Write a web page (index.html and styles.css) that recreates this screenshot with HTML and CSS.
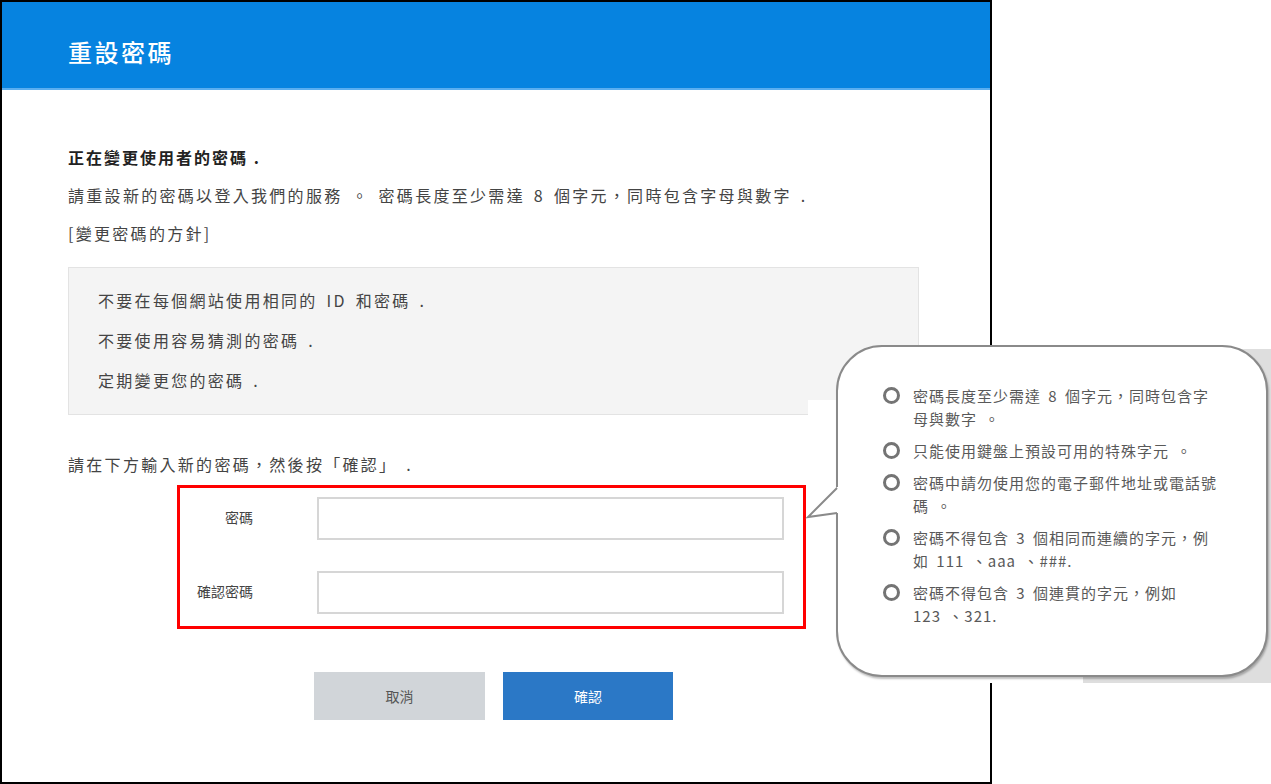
FILE: index.html
```html
<!DOCTYPE html>
<html lang="zh-Hant">
<head>
<meta charset="utf-8">
<title>重設密碼</title>
<link rel="stylesheet" href="styles.css">
</head>
<body>
<div class="dialog">
  <div class="header"><h1 class="title">重設密碼</h1></div>
  <div class="content">
    <p class="lead">正在變更使用者的密碼 .</p>
    <p class="line">請重設新的密碼以登入我們的服務 。 密碼長度至少需達 8 個字元，同時包含字母與數字 .</p>
    <p class="line">[變更密碼的方針]</p>
    <div class="policy">
      <p>不要在每個網站使用相同的 ID 和密碼 .</p>
      <p>不要使用容易猜測的密碼 .</p>
      <p>定期變更您的密碼 .</p>
    </div>
    <p class="line instr">請在下方輸入新的密碼，然後按「確認」 .</p>
    <div class="form-box">
      <label class="label" for="pw">密碼</label>
      <input class="field" id="pw" type="password">
      <label class="label" for="pw2">確認密碼</label>
      <input class="field" id="pw2" type="password">
    </div>
    <div class="buttons">
      <button class="btn btn-cancel" type="button">取消</button>
      <button class="btn btn-ok" type="button">確認</button>
    </div>
  </div>
</div>

<div class="cover"></div>
<div class="shade"></div>
<div class="bubble">
  <ul class="rules">
    <li><span class="dot"></span><span class="txt">密碼長度至少需達 8 個字元，同時包含字<br>母與數字 。</span></li>
    <li><span class="dot"></span><span class="txt">只能使用鍵盤上預設可用的特殊字元 。</span></li>
    <li><span class="dot"></span><span class="txt">密碼中請勿使用您的電子郵件地址或電話號<br>碼 。</span></li>
    <li><span class="dot"></span><span class="txt">密碼不得包含 3 個相同而連續的字元，例<br>如 111 、aaa 、###.</span></li>
    <li><span class="dot"></span><span class="txt">密碼不得包含 3 個連貫的字元，例如<br>123 、321.</span></li>
  </ul>
</div>
<svg class="pointer" width="40" height="36" viewBox="0 0 40 36">
  <polygon points="33,3 4,33 33,29 38,29 38,3" fill="#ffffff"/>
  <polyline points="33,4 4,33 33,29" fill="none" stroke="#8a8a8a" stroke-width="2" stroke-linejoin="miter"/>
</svg>
</body>
</html>
```

FILE: styles.css
```css
* { box-sizing: border-box; }

html, body {
  margin: 0;
  padding: 0;
}

body {
  width: 1271px;
  height: 784px;
  position: relative;
  overflow: hidden;
  background: #ffffff;
  font-family: "Noto Sans CJK TC", "Noto Sans", sans-serif;
  color: #444;
}

.dialog {
  width: 992px;
  height: 784px;
  border: 2px solid #000;
  background: #fff;
}

.header {
  height: 88px;
  background: #0683e0;
  border-bottom: 2px solid #5aaef0;
  padding: 14px 0 0 66px;
  display: flex;
  align-items: center;
}

.title {
  margin: 0;
  color: #fff;
  font-size: 24px;
  font-weight: 500;
  letter-spacing: 2.5px;
  line-height: 30px;
}

.content {
  padding: 48px 0 0 66px;
}

.content p {
  margin: 0;
}

.lead {
  font-size: 16px;
  font-weight: 700;
  color: #222;
  letter-spacing: 2px;
  line-height: 38px;
}

.line {
  font-size: 16px;
  color: #444;
  letter-spacing: 2.3px;
  word-spacing: 3px;
  line-height: 38px;
}

.policy {
  margin-top: 15px;
  width: 851px;
  background: #f4f4f4;
  border: 1px solid #e3e3e3;
  padding: 12px 29px 14px;
}

.policy p {
  font-size: 16px;
  color: #444;
  letter-spacing: 2.3px;
  word-spacing: 3px;
  line-height: 40px;
}

.instr {
  margin-top: 30px !important;
}

.form-box {
  margin: 2px 0 0 109px;
  width: 629px;
  border: 3px solid #ff0000;
  padding: 9px 19px 12px 0;
  display: grid;
  grid-template-columns: 73px 467px;
  column-gap: 64px;
  row-gap: 31px;
  align-items: center;
}

.label {
  text-align: right;
  font-size: 14px;
  color: #444;
  line-height: 20px;
  margin-top: -3px;
}

.field {
  width: 467px;
  height: 43px;
  margin: 0;
  border: 2px solid #d6d6d6;
  background: #fff;
  outline: none;
}

.buttons {
  margin-top: 43px;
  padding-left: 246px;
  display: flex;
  gap: 18px;
}

.btn {
  height: 48px;
  border: none;
  margin: 0;
  padding: 0;
  font-family: "Noto Sans CJK TC", "Noto Sans", sans-serif;
  font-size: 14px;
  cursor: pointer;
}

.btn-cancel {
  width: 171px;
  background: #d1d5d9;
  color: #555;
}

.btn-ok {
  width: 170px;
  background: #2b78c6;
  color: #fff;
}

/* callout overlay */
.cover {
  position: absolute;
  left: 808px;
  top: 400px;
  width: 463px;
  height: 283px;
  background: #fff;
}

.shade {
  position: absolute;
  left: 1083px;
  top: 349px;
  width: 188px;
  height: 334px;
  background: #dedede;
}

.bubble {
  position: absolute;
  left: 836px;
  top: 345px;
  width: 432px;
  height: 332px;
  background: #fff;
  border: 2px solid #8a8a8a;
  border-radius: 46px;
  box-shadow: 1px 2px 2px rgba(0, 0, 0, 0.25);
  padding: 37px 0 0 45px;
}

.rules {
  list-style: none;
  margin: 0;
  padding: 0;
}

.rules li {
  display: flex;
  align-items: flex-start;
  gap: 13px;
  margin-bottom: 9px;
}

.dot {
  flex: none;
  width: 17px;
  height: 17px;
  margin-top: 3px;
  border: 3px solid #747474;
  border-radius: 50%;
}

.txt {
  font-size: 15px;
  letter-spacing: 1px;
  word-spacing: 3px;
  line-height: 23px;
  color: #595959;
  white-space: nowrap;
}

.pointer {
  position: absolute;
  left: 804px;
  top: 484px;
}
```
